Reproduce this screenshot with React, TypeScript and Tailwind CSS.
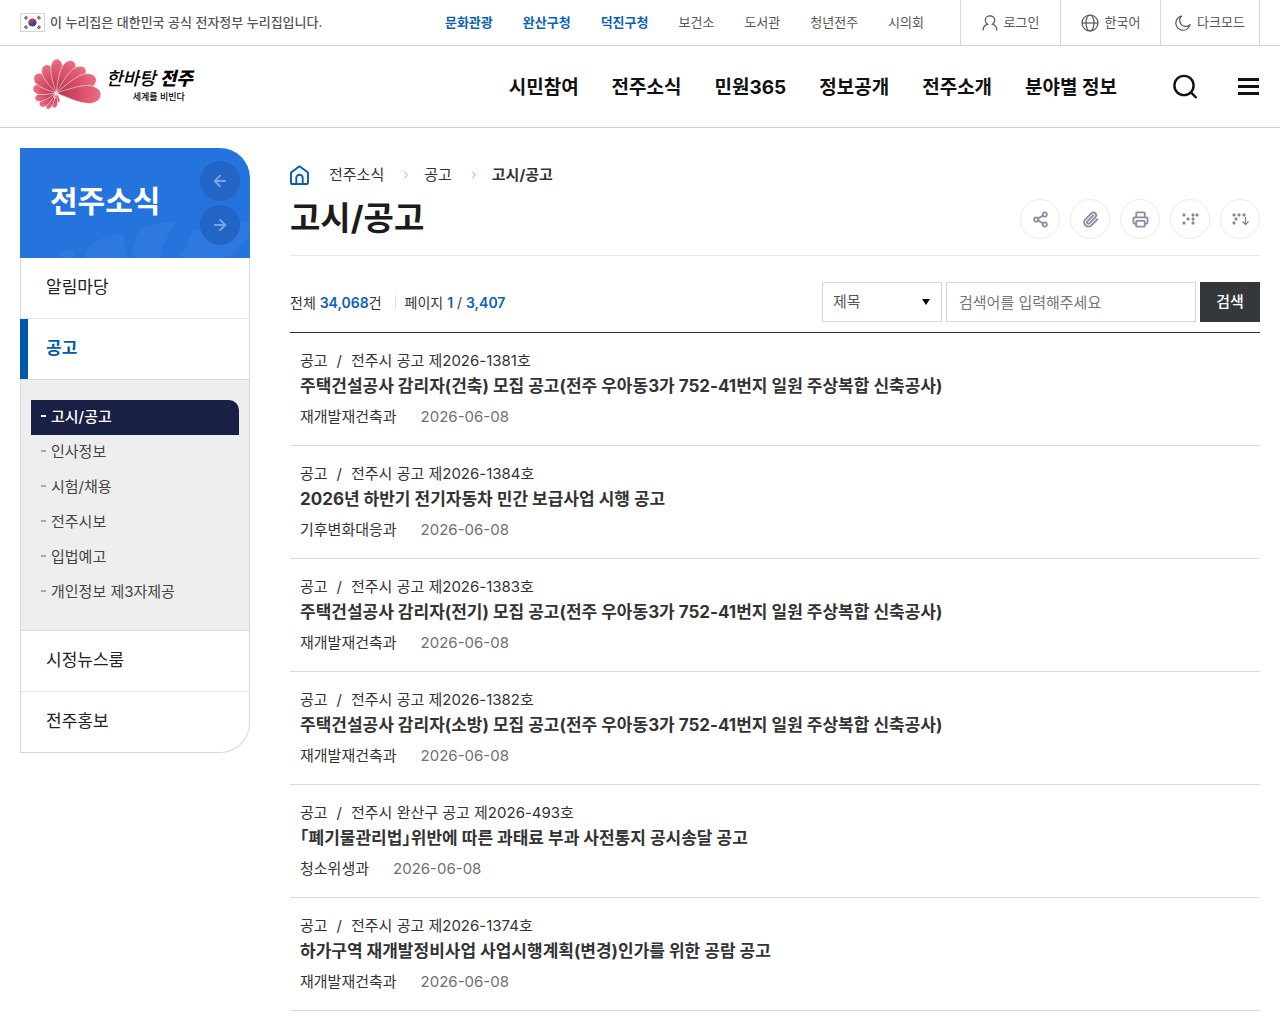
import type { ReactNode } from "react";
import { ArrowLeft, ArrowRight, ChevronRight, Paperclip, Printer, Share2 } from "lucide-react";

const topLinks = [
  { label: "문화관광", strong: true },
  { label: "완산구청", strong: true },
  { label: "덕진구청", strong: true },
  { label: "보건소", strong: false },
  { label: "도서관", strong: false },
  { label: "청년전주", strong: false },
  { label: "시의회", strong: false },
];

const mainNav = ["시민참여", "전주소식", "민원365", "정보공개", "전주소개", "분야별 정보"];

const subMenu = ["고시/공고", "인사정보", "시험/채용", "전주시보", "입법예고", "개인정보 제3자제공"];

const notices = [
  {
    number: "전주시 공고 제2026-1381호",
    title: "주택건설공사 감리자(건축) 모집 공고(전주 우아동3가 752-41번지 일원 주상복합 신축공사)",
    department: "재개발재건축과",
    date: "2026-06-08",
  },
  {
    number: "전주시 공고 제2026-1384호",
    title: "2026년 하반기 전기자동차 민간 보급사업 시행 공고",
    department: "기후변화대응과",
    date: "2026-06-08",
  },
  {
    number: "전주시 공고 제2026-1383호",
    title: "주택건설공사 감리자(전기) 모집 공고(전주 우아동3가 752-41번지 일원 주상복합 신축공사)",
    department: "재개발재건축과",
    date: "2026-06-08",
  },
  {
    number: "전주시 공고 제2026-1382호",
    title: "주택건설공사 감리자(소방) 모집 공고(전주 우아동3가 752-41번지 일원 주상복합 신축공사)",
    department: "재개발재건축과",
    date: "2026-06-08",
  },
  {
    number: "전주시 완산구 공고 제2026-493호",
    title: "「폐기물관리법」위반에 따른 과태료 부과 사전통지 공시송달 공고",
    department: "청소위생과",
    date: "2026-06-08",
  },
  {
    number: "전주시 공고 제2026-1374호",
    title: "하가구역 재개발정비사업 사업시행계획(변경)인가를 위한 공람 공고",
    department: "재개발재건축과",
    date: "2026-06-08",
  },
];

// Tip of each petal and its half width, drawn from the shared centre.
const petals = [
  { x: 60, y: 44, w: 2 },
  { x: 55, y: 49, w: 3 },
  { x: 48, y: 50, w: 3 },
  { x: 41, y: 47, w: 4 },
  { x: 36, y: 40, w: 4 },
  { x: 34, y: 29, w: 5 },
  { x: 36, y: 16, w: 6 },
  { x: 46, y: 6, w: 6 },
  { x: 58, y: 0, w: 6 },
  { x: 74, y: 2, w: 7 },
  { x: 86, y: 9, w: 7 },
  { x: 97, y: 19, w: 8 },
  { x: 102, y: 36, w: 9 },
];

function LogoFlower() {
  const cx = 57;
  const cy = 34;
  return (
    <svg width="70" height="52" viewBox="33 0 70 52" aria-hidden="true">
      <defs>
        <linearGradient id="petal" x1="0" x2="1" y1="0" y2="0">
          <stop offset="0" stopColor="#b5314c" />
          <stop offset="0.5" stopColor="#d54c65" />
          <stop offset="1" stopColor="#ea7083" />
        </linearGradient>
      </defs>
      {petals.map(({ x, y, w }) => {
        const length = Math.hypot(x - cx, y - cy);
        const angle = (Math.atan2(y - cy, x - cx) * 180) / Math.PI;
        return (
          <path
            key={`${x}-${y}`}
            d={`M0 0 C${length * 0.3} ${-w * 0.5} ${length * 0.5} ${-w} ${length * 0.75} ${-w} C${length * 1.08} ${-w * 0.8} ${length * 1.08} ${w * 0.8} ${length * 0.75} ${w} C${length * 0.5} ${w} ${length * 0.3} ${w * 0.5} 0 0Z`}
            transform={`translate(${cx} ${cy}) rotate(${angle})`}
            fill="url(#petal)"
            stroke="#fff"
            strokeWidth="0.5"
          />
        );
      })}
      <path d="M60 44c3-5 1-10-3-9-3 1-2 5 0 4" fill="none" stroke="#fff" strokeWidth="0.8" />
    </svg>
  );
}

function Logo() {
  return (
    <a href="#" className="ml-3 flex items-center gap-1 pb-1 text-black" aria-label="전주시">
      <LogoFlower />
      <span className="flex flex-col items-end">
        <span className="flex items-center gap-1 text-[18px] leading-6 italic">
          <span className="font-medium">한바탕</span>
          <span className="font-black">전주</span>
        </span>
        <span className="pr-2 text-[9px] leading-3 font-medium">세계를 비빈다</span>
      </span>
    </a>
  );
}

function KoreanFlag() {
  return (
    <svg width="25" height="19" viewBox="0 0 25 19" aria-hidden="true">
      <rect x="0.5" y="0.5" width="24" height="18" fill="#fff" stroke="#d4d4d4" />
      <g transform="rotate(20 12.5 9.5)">
        <path d="M8.500 9.500a4 4 0 0 1 8 0z" fill="#d0304a" />
        <path d="M8.500 9.500a4 4 0 0 0 8 0z" fill="#1b4fa8" />
        <circle cx="10.500" cy="9.500" r="2" fill="#d0304a" />
        <circle cx="14.500" cy="9.500" r="2" fill="#1b4fa8" />
      </g>
      <g stroke="#4a4a4a" strokeWidth="3" strokeDasharray="0.9 0.4">
        <path d="M5 6l2-2.500M18 15.500l2-2.500M5 13l2 2.500M18 3.500L20 6" />
      </g>
    </svg>
  );
}

function UserIcon() {
  return (
    <svg width="16" height="16" viewBox="0 0 16 16" fill="none" stroke="#555" strokeWidth="1.2" aria-hidden="true">
      <path d="M1 15.500c.2-3.300 1.800-5.500 4.600-6.300-1.500-.9-2.400-2.200-2.400-3.900a4.800 4.500 0 0 1 9.600 0c0 1.700-.9 3-2.400 3.900 2.800.8 4.400 3 4.600 6.300" />
    </svg>
  );
}

function GlobeIcon() {
  return (
    <svg width="18" height="18" viewBox="0 0 18 18" fill="none" stroke="#555" strokeWidth="1.200" aria-hidden="true">
      <circle cx="9" cy="9" r="8" />
      <ellipse cx="9" cy="9" rx="4" ry="8" />
      <path d="M1 9h16" />
    </svg>
  );
}

function MoonIcon() {
  return (
    <svg width="16" height="16" viewBox="0 0 16 16" fill="none" stroke="#555" strokeWidth="1.200" aria-hidden="true">
      <path d="M6.500 1A7.200 7.200 0 1 0 15 9.700 5.200 5.200 0 0 1 6.500 1z" strokeLinejoin="round" />
    </svg>
  );
}

function HomeIcon() {
  return (
    <svg width="19" height="20" viewBox="0 0 19 20" fill="none" stroke="#0b5cab" strokeWidth="1.900" aria-hidden="true">
      <path d="M1 7.500L9.500 1.200 18 7.500V18q0 1-1 1H2q-1 0-1-1z" strokeLinejoin="round" />
      <path d="M6.300 19v-6a3.200 3.200 0 0 1 6.400 0v6" />
    </svg>
  );
}

function BrailleIcon({ download = false }: { download?: boolean }) {
  const dots = download
    ? [[4, 5], [9, 5], [14, 5], [6, 9], [4, 13]]
    : [[4, 5], [4, 13], [8, 9], [13, 5], [13, 9], [13, 13], [17, 5]];
  return (
    <svg width="20" height="18" viewBox="0 0 20 18" fill="#85858f" aria-hidden="true">
      {dots.map(([x, y]) => (
        <rect key={`${x}-${y}`} x={x - 1.4} y={y - 1.4} width="2.800" height="2.800" rx="0.900" />
      ))}
      {download && (
        <path d="M15.500 7v7.500M12.500 11.500l3 3 3-3" fill="none" stroke="#85858f" strokeWidth="1.300" />
      )}
    </svg>
  );
}

function UtilityButton({ icon, label, last = false }: { icon: ReactNode; label: string; last?: boolean }) {
  return (
    <button
      type="button"
      className={`flex w-[100px] items-center justify-center gap-1.5 border-l border-[#d8d8d8] text-[13px] text-[#555] ${last ? "border-r" : ""}`}
    >
      {icon}
      {label}
    </button>
  );
}

function ToolButton({ label, children }: { label: string; children: ReactNode }) {
  return (
    <button
      type="button"
      aria-label={label}
      className="flex size-10 items-center justify-center rounded-full border border-[#ebebef] text-[#8c8ca5]"
    >
      {children}
    </button>
  );
}

function TopBar() {
  return (
    <div className="flex h-[46px] items-stretch border-b border-[#d2d2d2] px-5">
      <p className="flex items-center gap-[5px] text-[13px] font-medium text-[#555]">
        <KoreanFlag />
        이 누리집은 대한민국 공식 전자정부 누리집입니다.
      </p>
      <nav aria-label="관련 사이트" className="mr-9 ml-auto flex items-center gap-[30px] text-[13px]">
        {topLinks.map((link) => (
          <a key={link.label} href="#" className={link.strong ? "font-bold text-[#0b62b4]" : "text-[#555]"}>
            {link.label}
          </a>
        ))}
      </nav>
      <UtilityButton icon={<UserIcon />} label="로그인" />
      <UtilityButton icon={<GlobeIcon />} label="한국어" />
      <UtilityButton icon={<MoonIcon />} label="다크모드" last />
    </div>
  );
}

function Header() {
  return (
    <header>
      <TopBar />
      <div className="flex h-[82px] items-center border-b border-[#d2d2d2] px-5">
        <Logo />
        <nav aria-label="주 메뉴" className="ml-auto flex gap-[33px] pt-1 text-[19px] font-bold text-[#111]">
          {mainNav.map((label) => (
            <a key={label} href="#">
              {label}
            </a>
          ))}
        </nav>
        <button type="button" aria-label="통합검색" className="ml-14">
          <svg width="25" height="25" viewBox="0 0 25 25" fill="none" stroke="#111" strokeWidth="2.400">
            <circle cx="11" cy="11.500" r="9.600" />
            <path d="M17.700 18.200L23.500 24" />
          </svg>
        </button>
        <button type="button" aria-label="전체메뉴" className="mr-px ml-10">
          <svg width="21" height="17" viewBox="0 0 21 17" fill="#111">
            <path d="M0 0h21v3H0zM0 7h21v3H0zM0 14h21v3H0z" />
          </svg>
        </button>
      </div>
    </header>
  );
}

function Sidebar() {
  const itemClass = "flex h-[60px] items-center pl-[25px] text-[17px] text-[#222]";

  return (
    <aside className="w-[230px] shrink-0">
      <div className="relative flex h-[110px] items-center justify-between overflow-hidden rounded-tr-[30px] bg-[#2574de] pr-2.5 pl-[30px]">
        <svg className="absolute bottom-0 left-0" width="230" height="50" viewBox="0 0 230 50" fill="#2d79e0" aria-hidden="true">
          <path d="M38 50q5-9 15-8l2 8zM63 50q6-13 12-16 14-7 29-9-2 10 4 25zM111 50q4-21 11-31 16-4 36-6-17 20-18 37zM158 50q10-13 14-28l58-10v16l-21 22z" />
        </svg>
        <h2 className="relative pb-1 text-[30px] font-bold text-white">전주소식</h2>
        <div className="relative flex flex-col gap-1">
          <button type="button" aria-label="이전 메뉴" className="flex size-10 items-center justify-center rounded-full bg-[#2265c6] text-[#75a4e8]">
            <ArrowLeft size={18} strokeWidth={2.4} />
          </button>
          <button type="button" aria-label="다음 메뉴" className="flex size-10 items-center justify-center rounded-full bg-[#2265c6] text-[#75a4e8]">
            <ArrowRight size={18} strokeWidth={2.4} />
          </button>
        </div>
      </div>
      <ul className="rounded-br-[30px] border border-t-0 border-[#d9d9d9]">
        <li className="border-b border-[#e5e5e5]">
          <a href="#" className={itemClass}>
            알림마당
          </a>
        </li>
        <li>
          <a
            href="#"
            className="-ml-px flex h-[60px] items-center border-l-8 border-[#005bab] pl-[18px] text-[17px] font-bold text-[#005bab]"
          >
            공고
          </a>
          <ul className="border-y border-[#dcdcdc] bg-[#eee] px-2.5 py-5 text-[15px]">
            {subMenu.map((label, index) => (
              <li key={label}>
                <a
                  href="#"
                  className={`flex h-[35px] items-center gap-[5px] px-2.5 ${
                    index === 0 ? "rounded-tr-[10px] bg-[#192045] font-medium text-white" : "text-[#444]"
                  }`}
                >
                  <span className={`mb-1 h-0.5 w-[5px] ${index === 0 ? "bg-white" : "bg-[#aaa]"}`} />
                  {label}
                </a>
              </li>
            ))}
          </ul>
        </li>
        <li className="border-b border-[#e5e5e5]">
          <a href="#" className={itemClass}>
            시정뉴스룸
          </a>
        </li>
        <li>
          <a href="#" className={itemClass}>
            전주홍보
          </a>
        </li>
      </ul>
    </aside>
  );
}

function PageHeading() {
  return (
    <div className="border-b border-[#e8e8e8] pt-[15px] pb-4">
      <nav aria-label="현재 위치" className="flex h-6 items-center text-[15px] text-[#333]">
        <a href="#" aria-label="홈">
          <HomeIcon />
        </a>
        <a href="#" className="ml-5">
          전주소식
        </a>
        <ChevronRight size={12} strokeWidth={1.5} className="mr-3 ml-4 text-[#888]" />
        <a href="#">공고</a>
        <ChevronRight size={12} strokeWidth={1.5} className="mr-3 ml-4 text-[#888]" />
        <a href="#" className="font-bold">
          고시/공고
        </a>
      </nav>
      <div className="mt-3 flex h-10 items-center justify-between">
        <h1 className="text-[33px] font-bold text-[#1c1c1c]">고시/공고</h1>
        <div className="flex gap-2.5">
          <ToolButton label="공유하기">
            <Share2 size={17} strokeWidth={2.6} />
          </ToolButton>
          <ToolButton label="주소 복사">
            <Paperclip size={17} strokeWidth={2.6} />
          </ToolButton>
          <ToolButton label="인쇄하기">
            <Printer size={17} strokeWidth={2.6} />
          </ToolButton>
          <ToolButton label="점자 보기">
            <BrailleIcon />
          </ToolButton>
          <ToolButton label="점자 내려받기">
            <BrailleIcon download />
          </ToolButton>
        </div>
      </div>
    </div>
  );
}

function SearchBar() {
  return (
    <div className="flex items-center justify-between border-b border-[#333] pt-[26px] pb-2.5">
      <p className="flex items-center text-[14px] text-[#333]">
        <span>
          전체 <b className="font-semibold text-[#0b62b4]">34,068</b>건
        </span>
        <span className="mr-[9px] ml-[13px] h-3.5 w-px bg-[#e0e0e0]" />
        <span>
          페이지 <b className="font-semibold text-[#0b62b4]">1</b> / <b className="font-semibold text-[#0b62b4]">3,407</b>
        </span>
      </p>
      <form className="flex gap-1 text-[15px]" onSubmit={(event) => event.preventDefault()}>
        <div className="relative">
          <select
            aria-label="검색 구분"
            className="h-10 w-[120px] appearance-none border border-[#d8d8d8] bg-white px-2.5 text-[#555]"
          >
            <option>제목</option>
            <option>내용</option>
          </select>
          <svg className="pointer-events-none absolute top-[17px] right-3" width="8" height="6" viewBox="0 0 8 6" aria-hidden="true">
            <path d="M0 0h8L4 6z" />
          </svg>
        </div>
        <input
          type="text"
          aria-label="검색어"
          placeholder="검색어를 입력해주세요"
          className="h-10 w-[250px] border border-[#d8d8d8] px-3 placeholder:text-[#757575]"
        />
        <button type="submit" className="h-10 w-[60px] bg-[#35383a] font-medium text-white">
          검색
        </button>
      </form>
    </div>
  );
}

function NoticeList() {
  return (
    <ul>
      {notices.map((notice) => (
        <li key={notice.number} className="border-b border-[#dcdcdc] px-2.5 py-4 text-[15px] leading-6 text-[#333]">
          <p className="flex gap-[9px]">
            <span>공고</span>
            <span>/</span>
            <span>{notice.number}</span>
          </p>
          <a href="#" className="block text-[17px] leading-[26px] font-bold [font-feature-settings:'halt']">
            {notice.title}
          </a>
          <p className="mt-1.5 flex gap-6">
            <span>{notice.department}</span>
            <span className="text-[#707070]">{notice.date}</span>
          </p>
        </li>
      ))}
    </ul>
  );
}

export default function App() {
  return (
    <div className="bg-white font-['Inter','Noto_Sans_CJK_KR',sans-serif]">
      <Header />
      <div className="flex items-start gap-10 px-5 pt-5">
        <Sidebar />
        <main className="min-w-0 flex-1">
          <PageHeading />
          <SearchBar />
          <NoticeList />
        </main>
      </div>
    </div>
  );
}
